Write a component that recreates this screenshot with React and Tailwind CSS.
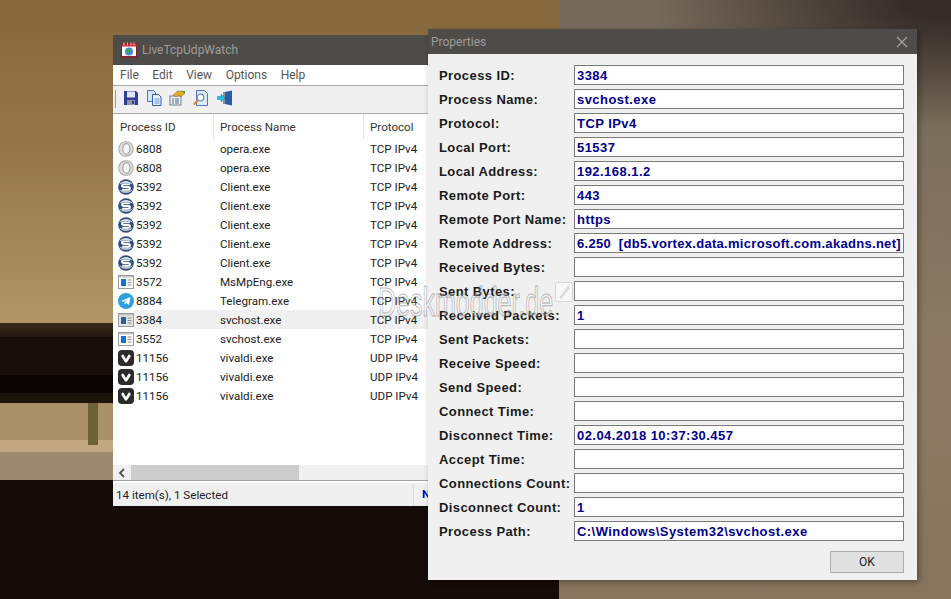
import React from "react";

const Opera = () => (
  <svg width="16" height="16" viewBox="0 0 16 16" className="shrink-0">
    <circle cx="8" cy="8" r="7.7" fill="#9c9c9c" />
    <circle cx="8" cy="8" r="6.9" fill="#dcdcdc" />
    <ellipse cx="8.4" cy="8" rx="3.6" ry="5.4" fill="#f7f7f7" stroke="#a0a0a0" strokeWidth="1.1" />
  </svg>
);
const Client = () => (
  <svg width="16" height="16" viewBox="0 0 16 16" className="shrink-0">
    <circle cx="8" cy="8" r="7.8" fill="#2f4a78" />
    <path d="M1.2 5.5 C4 0.8 12 0.8 14.8 5.5 C11 3.8 5 3.8 1.2 5.5 Z" fill="#d3dbe7" />
    <path d="M1.2 10.5 C5 12.2 11 12.2 14.8 10.5 C12 15.2 4 15.2 1.2 10.5 Z" fill="#b5c2d5" />
    <path d="M11.8 5.4 L6 5.4 Q4 5.4 4 6.8 Q4 8 6 8 L10 8 Q12 8 12 9.3 Q12 10.7 10 10.7 L4.2 10.7" fill="none" stroke="#ffffff" strokeWidth="1.9" />
  </svg>
);
const Win = ({ dim }) => (
  <svg width="16" height="14" viewBox="0 0 16 14" className="shrink-0">
    <rect x="0.5" y="0.5" width="15" height="13" fill={dim ? "#e4e4e4" : "#ffffff"} stroke="#9a9a9a" />
    <rect x="1" y="1" width="14" height="1.5" fill="#c4c4c4" />
    <rect x="3" y="4" width="5" height="7" fill={dim ? "#2a5f9e" : "#1673d1"} />
    <path d="M9.5 5h4M9.5 7.5h4M9.5 10h4" stroke="#8a8a8a" />
  </svg>
);
const WinDim = () => <Win dim />;
const Telegram = () => (
  <svg width="16" height="16" viewBox="0 0 16 16" className="shrink-0">
    <circle cx="8" cy="8" r="8" fill="#2f9fdc" />
    <path d="M3 8 L12.5 4 L11 12 L8.2 10 L6.8 11.5 L6.4 9 L10.5 5.7 L5.5 8.8 Z" fill="#ffffff" />
  </svg>
);
const Vivaldi = () => (
  <svg width="16" height="16" viewBox="0 0 16 16" className="shrink-0">
    <rect width="16" height="16" rx="4" fill="#2b2b2b" />
    <path d="M3.6 5.2 Q5 3.8 6 5.4 L8 9 L10 5.4 Q11 3.8 12.4 5.2 Q13 6 12.4 7 L9.2 12 Q8 13.4 6.8 12 L3.6 7 Q3 6 3.6 5.2 Z" fill="#ffffff" />
  </svg>
);

const rows = [
  [Opera, "6808", "opera.exe", "TCP IPv4"],
  [Opera, "6808", "opera.exe", "TCP IPv4"],
  [Client, "5392", "Client.exe", "TCP IPv4"],
  [Client, "5392", "Client.exe", "TCP IPv4"],
  [Client, "5392", "Client.exe", "TCP IPv4"],
  [Client, "5392", "Client.exe", "TCP IPv4"],
  [Client, "5392", "Client.exe", "TCP IPv4"],
  [Win, "3572", "MsMpEng.exe", "TCP IPv4"],
  [Telegram, "8884", "Telegram.exe", "TCP IPv4"],
  [WinDim, "3384", "svchost.exe", "TCP IPv4", true],
  [Win, "3552", "svchost.exe", "TCP IPv4"],
  [Vivaldi, "11156", "vivaldi.exe", "UDP IPv4"],
  [Vivaldi, "11156", "vivaldi.exe", "UDP IPv4"],
  [Vivaldi, "11156", "vivaldi.exe", "UDP IPv4"],
];

const props = [
  ["Process ID:", "3384"],
  ["Process Name:", "svchost.exe"],
  ["Protocol:", "TCP IPv4"],
  ["Local Port:", "51537"],
  ["Local Address:", "192.168.1.2"],
  ["Remote Port:", "443"],
  ["Remote Port Name:", "https"],
  ["Remote Address:", "6.250  [db5.vortex.data.microsoft.com.akadns.net]"],
  ["Received Bytes:", ""],
  ["Sent Bytes:", ""],
  ["Received Packets:", "1"],
  ["Sent Packets:", ""],
  ["Receive Speed:", ""],
  ["Send Speed:", ""],
  ["Connect Time:", ""],
  ["Disconnect Time:", "02.04.2018 10:37:30.457"],
  ["Accept Time:", ""],
  ["Connections Count:", ""],
  ["Disconnect Count:", "1"],
  ["Process Path:", "C:\\Windows\\System32\\svchost.exe"],
];

const Tools = () => (
  <div className="flex items-center gap-[7px] pl-[10px]">
    <svg width="16" height="16" viewBox="0 0 16 16">
      <path d="M1 1h12l2 2v12H1z" fill="#2d3f9a" />
      <rect x="4" y="1.5" width="8" height="6" fill="#dfe6f5" />
      <rect x="4" y="10" width="8" height="5" fill="#8f96a8" />
      <rect x="9" y="11" width="2" height="3" fill="#2d3f9a" />
    </svg>
    <svg width="16" height="16" viewBox="0 0 16 16">
      <path d="M1.5 0.5h6l2 2v9h-8z" fill="#d5e3f7" stroke="#4b78bd" />
      <path d="M6.5 4.5h6l2.5 2.5v8.5h-8.5z" fill="#e8f0fb" stroke="#2f63b0" />
      <path d="M8.5 9h5M8.5 11h5M8.5 13h5" stroke="#6f94cc" />
    </svg>
    <svg width="17" height="16" viewBox="0 0 17 16">
      <rect x="1" y="6" width="11" height="9" fill="#f4f4f4" stroke="#6d7a8c" />
      <path d="M3 9h2M6 9h4M3 11h2M6 11h4M3 13h2M6 13h4" stroke="#4a5f80" />
      <path d="M4 5 L9 1 L14 1 L16 3 L12 7 L10 5 L7 7 Z" fill="#e0a92a" stroke="#8b6a17" strokeWidth="0.5" />
      <path d="M13 1 L16 1 L16 4 Z" fill="#3f9a3a" />
    </svg>
    <svg width="16" height="16" viewBox="0 0 16 16">
      <path d="M3.5 0.5h8l3 3v12h-11z" fill="#dfeaf9" stroke="#4b78bd" />
      <circle cx="7.5" cy="7.5" r="3.4" fill="#ffffff" stroke="#6d8fc4" strokeWidth="1.3" />
      <path d="M5 10 L1 14.5" stroke="#d8893a" strokeWidth="2.2" />
    </svg>
    <svg width="16" height="16" viewBox="0 0 16 16" className="ml-[1px]">
      <path d="M8 2 L15 0.5 V15.5 L8 14 Z" fill="#2a5da8" />
      <path d="M6 2h2v12H6z" fill="#8a8f98" />
      <path d="M0.5 6.5h3.5V4l4 4-4 4V9.5H0.5z" fill="#18c8e6" stroke="#0a7f98" strokeWidth="0.5" />
    </svg>
  </div>
);

export default function App() {
  return (
    <div className="relative flex w-[951px] h-[599px] overflow-hidden font-['Roboto','Noto_Sans',sans-serif]">
      {/* desktop photograph */}
      <div className="flex flex-col w-[559px] h-full">
        <div className="h-[323px] bg-[linear-gradient(180deg,#86683a_0%,#94764a_45%,#b19566_100%)]" />
        <div className="h-[14px] bg-[linear-gradient(180deg,#3a2c1a,#241810)]" />
        <div className="h-[38px] bg-[#1a0e0b]" />
        <div className="h-[18px] bg-[#090402]" />
        <div className="h-[10px] bg-[#1c1409]" />
        <div className="h-[37px] bg-[#a89069]" />
        <div className="h-[12px] bg-[#c2a981]" />
        <div className="h-[28px] bg-[#9d8a70]" />
        <div className="flex-1 bg-[#150b09]" />
      </div>
      <div className="flex-1 h-full bg-[radial-gradient(ellipse_300px_130px_at_100%_0%,#362c29_15%,transparent_100%),linear-gradient(180deg,#75695a_0%,#7e705c_30%,#8d7b65_60%,#86745d_100%)]" />
      <div className="absolute left-[88px] top-[403px] w-[10px] h-[42px] bg-[#6e6039]" />

      {/* main window */}
      <div className="absolute left-[113px] top-[35px] w-[330px] h-[471px] flex flex-col bg-white text-[11.6px] leading-[19px] text-[#222]">
        <div className="h-[30px] shrink-0 bg-[#4e4c48] flex items-center pl-[8px] gap-[5px] text-[#9f9d9a] text-[12px]">
          <svg width="16" height="16" viewBox="0 0 16 16">
            <rect x="0.5" y="1.5" width="15" height="14" fill="#ffffff" stroke="#7a2030" />
            <rect x="0.5" y="1.5" width="15" height="3" fill="#c3273d" />
            <path d="M3 0.5v3M6.5 0.5v3M10 0.5v3M13 0.5v3" stroke="#f0d080" />
            <circle cx="8" cy="9.5" r="4" fill="#3f8fd0" />
            <path d="M5.5 8 Q8 6 9.5 8 L8 11 L6 11 Z" fill="#42a845" />
            <rect x="1" y="14" width="14" height="1.5" fill="#8a2434" />
          </svg>
          <span>LiveTcpUdpWatch</span>
        </div>
        <div className="h-[20px] shrink-0 flex items-center gap-[13.5px] pl-[7px] text-[12px] text-[#555]">
          <span>File</span><span>Edit</span><span>View</span><span>Options</span><span>Help</span>
        </div>
        <div className="h-[29px] shrink-0 flex items-start pt-[4px] bg-[#f0f0f0] border-y border-[#a8a8a8] relative">
          <div className="absolute left-[2px] top-[4px] w-px h-[18px] bg-[#9a9a9a]" />
          <Tools />
        </div>
        <div className="h-[25px] shrink-0 flex items-center text-[#333]">
          <div className="w-[101px] h-full pl-[7px] pt-[1px] flex items-center border-r border-[#e5e5e5]">Process ID</div>
          <div className="w-[150px] h-full pl-[6px] pt-[1px] flex items-center border-r border-[#e5e5e5]">Process Name</div>
          <div className="pl-[6px] pt-[1px]">Protocol</div>
        </div>
        <div className="flex-1 flex flex-col">
          {rows.map(([Icon, id, name, proto, sel], i) => (
            <div key={i} className="h-[19px] shrink-0 flex items-center">
              <div className="w-[21px] pl-[5px] flex justify-start items-center h-full shrink-0"><div className="w-4 flex justify-center"><Icon /></div></div>
              <div className={`flex flex-1 h-full items-center pt-[1px] ${sel ? "bg-[#f0f0f0]" : ""}`}>
                <div className="w-[86px] pl-[2px]">{id}</div>
                <div className="w-[150px]">{name}</div>
                <div>{proto}</div>
              </div>
            </div>
          ))}
        </div>
        <div className="h-[15px] shrink-0 flex items-center bg-[#f0f0f0]">
          <div className="w-[18px] flex justify-center text-[#555]">
            <svg width="8" height="10" viewBox="0 0 8 10"><path d="M6 1 L2 5 L6 9" fill="none" stroke="#555" strokeWidth="1.8" /></svg>
          </div>
          <div className="w-[168px] h-full bg-[#cdcdcd]" />
        </div>
        <div className="h-[26px] shrink-0 flex items-center bg-[#f0f0f0] border-t border-[#9f9f9f] shadow-[inset_0_2px_0_#ffffff] text-[#222] pl-[3px] pt-[4px]">
          <span className="w-[297px]">14 item(s), 1 Selected</span>
          <span className="h-full border-l border-[#dcdcdc] pl-[8px] font-bold text-[#0000d0]">N</span>
        </div>
      </div>

      {/* properties dialog */}
      <div className="absolute left-[428px] top-[29px] w-[489px] h-[551px] flex flex-col bg-[#f0f0f0] shadow-[2px_2px_6px_rgba(0,0,0,0.35)]">
        <div className="h-[25px] shrink-0 bg-[#4e4c48] flex items-center justify-between pl-[3px] pr-[9px] text-[#9f9d9a] text-[12px]">
          <span>Properties</span>
          <svg width="12" height="12" viewBox="0 0 12 12"><path d="M1 1 L11 11 M11 1 L1 11" stroke="#a5a3a0" strokeWidth="1.2" /></svg>
        </div>
        <div className="flex flex-col gap-1 pt-[11px] pl-[11px] pr-[13px] font-['Liberation_Sans',Arial,sans-serif] font-bold text-[13px] tracking-[0.4px]">
          {props.map(([label, value]) => (
            <div key={label} className="flex items-center h-5">
              <div className="w-[135px] text-[#1a1a1a] shrink-0 whitespace-nowrap pt-[1px]">{label}</div>
              <div className={`flex-1 h-5 min-w-0 overflow-hidden whitespace-pre border border-[#7a7a7a] bg-white text-[#00008b] leading-[19px] pl-[2px] ${label === "Remote Address:" ? "tracking-[0.3px]" : "tracking-[0.45px]"}`}>{value}</div>
            </div>
          ))}
        </div>
        <div className="flex justify-end pr-[13px] pt-[10px]">
          <div className="w-[74px] h-[22px] flex items-center justify-center border border-[#adadad] bg-[#e1e1e1] text-[12px] text-[#222]">OK</div>
        </div>
      </div>

      {/* watermark */}
      <span className="absolute left-[378px] top-[279px] origin-left scale-x-[0.61] whitespace-nowrap font-['Liberation_Sans',sans-serif] text-[41px] leading-[46px] text-white/25 [-webkit-text-stroke:1px_rgba(110,110,110,0.5)] pointer-events-none">Deskmodder.de</span>
      <svg width="18" height="20" viewBox="0 0 18 20" className="absolute left-[555px] top-[282px] opacity-50 pointer-events-none">
        <rect x="0.5" y="0.5" width="17" height="19" rx="2" fill="#ffffff" stroke="#bdbdbd" />
        <path d="M4 16 L13 4 L15 6 L6 17 Z" fill="#c4c4c4" />
      </svg>
    </div>
  );
}
